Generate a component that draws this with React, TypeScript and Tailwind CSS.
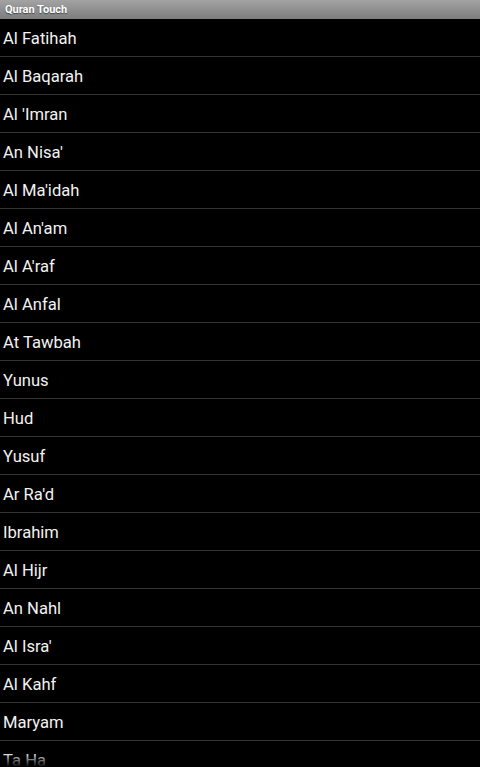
const surahs = [
  "Al Fatihah",
  "Al Baqarah",
  "Al 'Imran",
  "An Nisa'",
  "Al Ma'idah",
  "Al An'am",
  "Al A'raf",
  "Al Anfal",
  "At Tawbah",
  "Yunus",
  "Hud",
  "Yusuf",
  "Ar Ra'd",
  "Ibrahim",
  "Al Hijr",
  "An Nahl",
  "Al Isra'",
  "Al Kahf",
  "Maryam",
  "Ta Ha",
  "Al Anbya'",
];

export default function App() {
  return (
    <div className="relative h-[767px] w-[480px] overflow-hidden bg-black font-['Roboto',sans-serif] text-white">
      <div className="flex h-[19px] items-center bg-gradient-to-b from-[#a3a3a3] to-[#7d7d7d] px-[5px]">
        <span className="text-[11px] font-bold leading-none text-white [text-shadow:0_1px_1px_rgba(0,0,0,0.5)]">
          Quran Touch
        </span>
      </div>
      <ul>
        {surahs.map((name) => (
          <li
            key={name}
            className="flex h-[38px] items-center border-b border-[#333333] px-[3px] pt-[3px] text-[16.6px] text-[#f2f2f2]"
          >
            {name}
          </li>
        ))}
      </ul>
      <div className="pointer-events-none absolute bottom-0 left-0 h-[14px] w-full bg-gradient-to-b from-transparent to-black" />
    </div>
  );
}
